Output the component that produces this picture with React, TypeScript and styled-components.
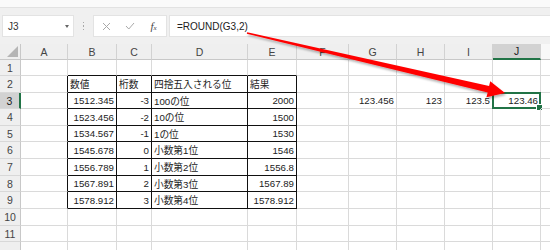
import React from "react"
import styled, { createGlobalStyle, css } from "styled-components"

const GlobalStyle = createGlobalStyle`
  html, body {
    margin: 0;
    padding: 0;
    background: #fff;
  }
  body {
    font-family: "Liberation Sans", "Noto Sans CJK JP", sans-serif;
  }
`

const GRID = "#dadada"
const GREEN = "#217346"

const Window = styled.div`
  position: relative;
  width: 550px;
  height: 250px;
  overflow: hidden;
  background: #fff;
`

const TopStrip = styled.div`
  height: 7px;
  background: #fafafa;
  border-bottom: 1px solid #e2e2e2;
`

const FormulaBar = styled.div`
  display: flex;
  align-items: center;
  height: 36px;
  padding-left: 3px;
  background: #f0f0f0;
`

const Box = styled.div`
  height: 20px;
  background: #fff;
  box-shadow: 0 0 0 1px #e3e3e3;
  display: flex;
  align-items: center;
`

const NameBox = styled(Box)`
  width: 70px;
  justify-content: space-between;
  padding: 0 4px 0 5px;
  box-sizing: border-box;
  font-size: 10px;
  color: #333;
`

const DropArrow = styled.span`
  width: 0;
  height: 0;
  border-left: 2.5px solid transparent;
  border-right: 2.5px solid transparent;
  border-top: 3px solid #666;
`

const Divider = styled.div`
  width: 21px;
  display: flex;
  flex-direction: column;
  align-items: center;
  gap: 2px;

  span {
    width: 1.5px;
    height: 1.5px;
    background: #a8a8a8;
  }
`

const FxBox = styled(Box)`
  width: 72px;
  display: grid;
  grid-template-columns: 24px 23px 25px;
  justify-items: center;
`

const FxLabel = styled.span`
  font-family: "Liberation Serif", serif;
  font-style: italic;
  font-size: 11px;
  color: #444;

  small {
    font-size: 7px;
  }
`

const FormulaInput = styled(Box)`
  flex: 1;
  margin-left: 4px;
  padding-left: 7px;
  font-size: 10px;
  color: #222;
`

const Sheet = styled.div`
  display: grid;
  grid-template-columns: 21px 47px 49px 35px 96px 49px 52px 48px 48px 48px 48px 40px;
  grid-template-rows: 16px 16px 17px 16px 17px 16px 17px 17px 16px 17px 17px 16px 16px 16px;
`

const HeaderBase = css`
  background: #efefef;
  color: #444;
  font-size: 10.5px;
  display: flex;
  align-items: center;
  justify-content: center;
  box-sizing: border-box;
`

const Corner = styled.div`
  ${HeaderBase};
  position: relative;
  border-right: 1px solid #c8c8c8;
  border-bottom: 1px solid #c8c8c8;

  &::after {
    content: "";
    position: absolute;
    right: 2px;
    bottom: 2px;
    width: 0;
    height: 0;
    border-left: 11px solid transparent;
    border-bottom: 11px solid #b5b5b5;
  }
`

const ColHeader = styled.div<{ $selected?: boolean; $blank?: boolean }>`
  ${HeaderBase};
  border-right: 1px solid #d2d2d2;
  border-bottom: 1px solid #c8c8c8;
  ${({ $selected }) =>
    $selected &&
    css`
      background: #d2d2d2;
      color: #222;
      border-bottom: 2px solid ${GREEN};
    `}
  ${({ $blank }) =>
    $blank &&
    css`
      background: #f8f8f8;
      border-right: none;
    `}
`

const RowHeader = styled.div<{ $selected?: boolean }>`
  ${HeaderBase};
  border-right: 1px solid #c8c8c8;
  border-bottom: 1px solid #d8d8d8;
  ${({ $selected }) =>
    $selected &&
    css`
      background: #d2d2d2;
      color: #222;
      border-right: 2px solid ${GREEN};
    `}
`

const Cell = styled.div<{ $align: string; $rightLine: string; $bottomLine: string }>`
  position: relative;
  box-sizing: border-box;
  display: flex;
  align-items: center;
  justify-content: ${({ $align }) => ($align === "right" ? "flex-end" : "flex-start")};
  padding: 0 2px 0 2px;
  font-size: 9.7px;
  color: #222;
  white-space: nowrap;
  border-right: 1px solid ${({ $rightLine }) => $rightLine};
  border-bottom: 1px solid ${({ $bottomLine }) => $bottomLine};
`

const Selection = styled.div`
  position: absolute;
  left: -1px;
  top: -1px;
  right: -1px;
  bottom: -1px;
  border: 2px solid ${GREEN};

  &::after {
    content: "";
    position: absolute;
    right: -4px;
    bottom: -4px;
    width: 5px;
    height: 5px;
    background: ${GREEN};
    border: 1px solid #fff;
  }
`

const ArrowLayer = styled.svg`
  position: absolute;
  left: 0;
  top: 0;
  pointer-events: none;
`

const COLS = ["A", "B", "C", "D", "E", "F", "G", "H", "I", "J", ""]
const TABLE_COLS = ["B", "C", "D", "E"]

const tableRows: string[][] = [
  ["数値", "桁数", "四捨五入される位", "結果"],
  ["1512.345", "-3", "100の位", "2000"],
  ["1523.456", "-2", "10の位", "1500"],
  ["1534.567", "-1", "1の位", "1530"],
  ["1545.678", "0", "小数第1位", "1546"],
  ["1556.789", "1", "小数第2位", "1556.8"],
  ["1567.891", "2", "小数第3位", "1567.89"],
  ["1578.912", "3", "小数第4位", "1578.912"],
]

const row3Extras: Record<string, string> = {
  G: "123.456",
  H: "123",
  I: "123.5",
  J: "123.46",
}

// row 12 only peeks in at the bottom edge, its number is out of view
const ROW_COUNT = 12
const LAST_LABELLED = 11

const cellContent = (row: number, col: string) => {
  const ti = TABLE_COLS.indexOf(col)
  if (ti >= 0 && row >= 2 && row <= 9) {
    const text = tableRows[row - 2][ti]
    const align = row === 2 || col === "D" ? "left" : "right"
    return { text, align }
  }
  if (row === 3 && row3Extras[col]) return { text: row3Extras[col], align: "right" }
  return { text: "", align: "left" }
}

const lineRight = (row: number, col: string) => {
  const inTable = row >= 2 && row <= 9
  if (inTable && (col === "A" || TABLE_COLS.includes(col))) return "#111"
  return GRID
}

const lineBottom = (row: number, col: string) => {
  if (TABLE_COLS.includes(col) && row >= 1 && row <= 9) return "#111"
  return GRID
}

const App: React.FC = () => {
  const rows = Array.from({ length: ROW_COUNT }, (_, i) => i + 1)

  return (
    <Window>
      <GlobalStyle />
      <TopStrip />
      <FormulaBar>
        <NameBox>
          J3
          <DropArrow />
        </NameBox>
        <Divider>
          <span />
          <span />
          <span />
        </Divider>
        <FxBox>
          <svg width="9" height="9" viewBox="0 0 9 9">
            <path d="M1 1 L8 8 M8 1 L1 8" stroke="#a9a9a9" strokeWidth="1" fill="none" />
          </svg>
          <svg width="10" height="8" viewBox="0 0 10 8">
            <path d="M1 4 L3.8 7 L9 1" stroke="#a9a9a9" strokeWidth="1" fill="none" />
          </svg>
          <FxLabel>
            f<small>x</small>
          </FxLabel>
        </FxBox>
        <FormulaInput>=ROUND(G3,2)</FormulaInput>
      </FormulaBar>

      <Sheet>
        <Corner />
        {COLS.map((c, i) => (
          <ColHeader key={i} $selected={c === "J"} $blank={c === ""}>
            {c}
          </ColHeader>
        ))}
        {rows.map((r) => (
          <React.Fragment key={r}>
            <RowHeader $selected={r === 3}>{r <= LAST_LABELLED ? r : ""}</RowHeader>
            {COLS.map((c, i) => {
              const { text, align } = cellContent(r, c)
              return (
                <Cell
                  key={i}
                  $align={align}
                  $rightLine={lineRight(r, c)}
                  $bottomLine={lineBottom(r, c)}
                >
                  {text}
                  {r === 3 && c === "J" && <Selection />}
                </Cell>
              )
            })}
          </React.Fragment>
        ))}
      </Sheet>

      <ArrowLayer width="550" height="250" viewBox="0 0 550 250">
        <defs>
          <filter id="arrowShadow" x="-5%" y="-20%" width="110%" height="140%">
            <feDropShadow dx="1" dy="2" stdDeviation="1.2" floodColor="#000" floodOpacity="0.3" />
          </filter>
        </defs>
        <polygon
          points="247.2,32.3 489.1,86 490.2,81.2 505,93 486.4,97.2 487.7,92.4 246.8,33.7"
          fill="#ff0000"
          filter="url(#arrowShadow)"
        />
      </ArrowLayer>
    </Window>
  )
}

export default App
